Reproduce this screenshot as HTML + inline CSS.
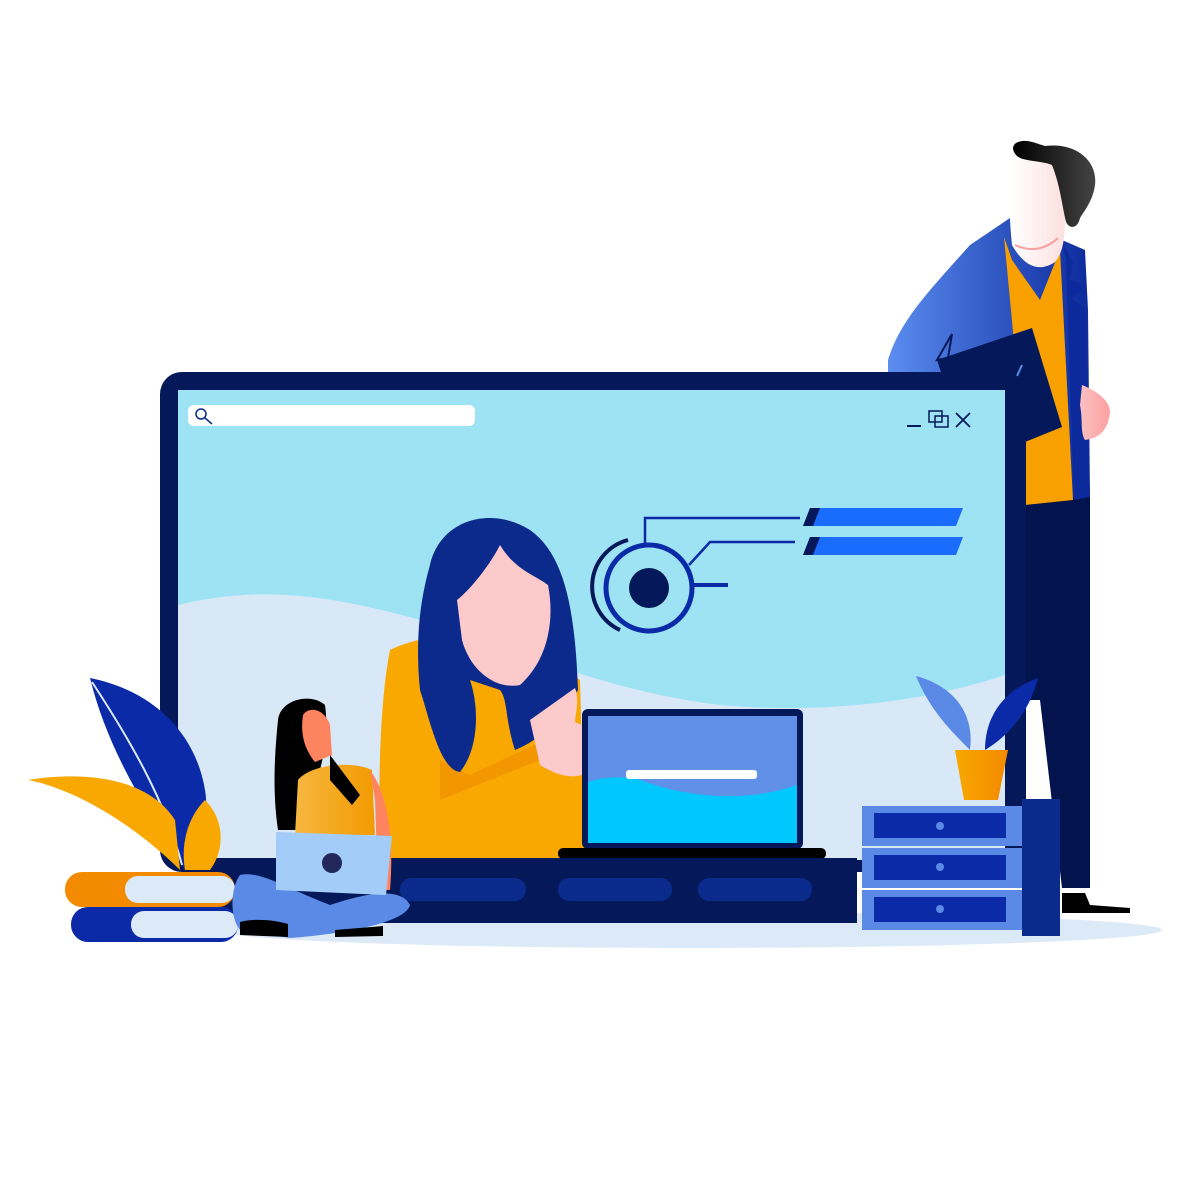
<!DOCTYPE html>
<html><head><meta charset="utf-8"><style>html,body{margin:0;padding:0;background:#fff;width:1200px;height:1200px;overflow:hidden}svg{display:block}</style></head>
<body>
<svg width="1200" height="1200" viewBox="0 0 1200 1200" xmlns="http://www.w3.org/2000/svg">
<defs>
<linearGradient id="jk" x1="0" x2="1"><stop offset="0" stop-color="#5b8df0"/><stop offset="1" stop-color="#0c2a9c"/></linearGradient>
<linearGradient id="hr" x1="0" x2="1"><stop offset="0" stop-color="#000"/><stop offset="1" stop-color="#444"/></linearGradient>
<linearGradient id="fc" x1="0" x2="1"><stop offset="0" stop-color="#fff"/><stop offset="1" stop-color="#fde0e0"/></linearGradient>
<linearGradient id="hd" x1="0" x2="1"><stop offset="0" stop-color="#fcc0c0"/><stop offset="1" stop-color="#fca0a0"/></linearGradient>
<linearGradient id="pot" x1="0" x2="1"><stop offset="0" stop-color="#f8a800"/><stop offset="1" stop-color="#f38a00"/></linearGradient>
<linearGradient id="gt" x1="0" x2="1"><stop offset="0" stop-color="#f6b840"/><stop offset="1" stop-color="#f39a00"/></linearGradient>
<clipPath id="scr"><rect x="178" y="390" width="827" height="470"/></clipPath>
</defs>
<!-- shadow -->
<ellipse cx="690" cy="930" rx="472" ry="18" fill="#dce9f7"/>
<!-- man (behind monitor) -->
<path d="M1025 500 L1090 495 L1090 888 L1062 888 L1040 700 L1025 700 Z" fill="#02134d"/>
<path d="M1062 893 L1085 893 L1090 905 L1130 908 L1130 913 L1062 913 Z" fill="#000"/>
<path d="M1010 218 L970 245 C930 290 900 320 888 360 L888 380 L1025 380 L1025 500 L1090 497 L1088 310 L1085 250 L1062 240Z" fill="url(#jk)"/>
<path d="M1004 237 L1012 260 L1040 300 L1060 250 L1073 500 L1025 505 L1025 460 L1010 300Z" fill="#f8a000"/>
<path d="M1062 242 L1073 262 L1070 280 L1086 285 L1072 298 L1085 310 L1090 497 L1074 500 L1066 260Z" fill="#0c2a9c"/>
<path d="M937 360 L1032 328 L1062 427 L1025 442 L1010 440 L950 400Z" fill="#05195a"/>
<path d="M937 360 L952 334 L948 358Z" fill="none" stroke="#05195a" stroke-width="2"/>
<line x1="1022" y1="365" x2="1017" y2="376" stroke="#5a8ae6" stroke-width="2"/>
<path d="M1082 385 C1095 390 1110 400 1110 412 C1108 430 1100 438 1085 440 C1080 432 1083 420 1080 405Z" fill="url(#hd)"/>
<path d="M1012 160 C1008 200 1010 225 1012 245 C1025 268 1040 272 1055 262 C1065 250 1066 230 1064 200 L1052 160Z" fill="url(#fc)"/>
<path d="M1015 245 C1030 252 1045 250 1058 238" fill="none" stroke="#f8a0a0" stroke-width="2"/>
<path d="M1016 143 C1025 138 1035 143 1045 146 C1075 142 1098 160 1095 185 C1093 200 1085 210 1080 218 C1078 228 1070 230 1066 222 C1062 205 1060 185 1052 165 C1040 160 1022 162 1016 155 C1012 150 1012 146 1016 143Z" fill="url(#hr)"/>
<!-- monitor -->
<rect x="160" y="372" width="866" height="500" rx="22" fill="#05195a"/>
<g clip-path="url(#scr)">
<rect x="178" y="390" width="827" height="470" fill="#9ee3f4"/>
<path d="M178 605 C260 585 330 595 420 620 C520 650 600 690 720 705 C830 715 930 700 1005 675 L1005 860 L178 860 Z" fill="#d9e8f7"/>
</g>
<rect x="188" y="405" width="287" height="21" rx="6" fill="#fff"/>
<circle cx="201" cy="414" r="5" fill="none" stroke="#0a2a8c" stroke-width="1.5"/><line x1="205" y1="418" x2="212" y2="424" stroke="#0a2a8c" stroke-width="1.5"/>
<line x1="907" y1="426" x2="921" y2="426" stroke="#05195a" stroke-width="2"/>
<rect x="929" y="411" width="13" height="11" fill="none" stroke="#05195a" stroke-width="1.5"/><rect x="935" y="416" width="13" height="11" fill="none" stroke="#05195a" stroke-width="1.5"/>
<path d="M956 413 L970 427 M970 413 L956 427" stroke="#05195a" stroke-width="1.8"/>
<!-- target -->
<path d="M620 630 A48 48 0 0 1 628 540" fill="none" stroke="#05195a" stroke-width="4"/>
<circle cx="649" cy="588" r="43" fill="none" stroke="#0a2aa8" stroke-width="5"/>
<circle cx="649" cy="588" r="20" fill="#05195a"/>
<path d="M645 545 L645 518 L800 518 M689 565 L710 542 L795 542" fill="none" stroke="#0a2aa8" stroke-width="2.5"/>
<path d="M692 585 L728 585" stroke="#0a2aa8" stroke-width="4"/>
<path d="M810 508 L963 508 L956 526 L803 526 Z" fill="#1a6cff"/><path d="M810 508 L820 508 L813 526 L803 526Z" fill="#05195a"/>
<path d="M810 537 L963 537 L956 555 L803 555 Z" fill="#1a6cff"/><path d="M810 537 L820 537 L813 555 L803 555Z" fill="#05195a"/>
<!-- woman -->
<path d="M390 650 C420 635 470 630 520 640 L580 680 L585 860 L380 860 C378 780 380 700 390 650Z" fill="#f8a800"/>
<path d="M440 760 L470 775 L545 740 L540 760 L440 800Z" fill="#f08c00" opacity=".6"/>
<path d="M430 565 C440 520 490 505 530 530 C565 555 575 610 578 690 C560 720 540 740 515 750 C505 720 508 700 500 690 L470 680 C480 710 478 750 460 772 C440 770 430 720 420 690 C415 640 420 600 430 565Z" fill="#0b2a8c"/>
<path d="M457 600 C470 590 490 565 500 545 C515 570 535 575 548 585 C555 620 548 660 520 685 C495 690 470 670 462 640Z" fill="#fccaca"/>
<path d="M530 720 L575 688 C580 700 575 715 575 722 L615 740 C630 748 625 758 610 755 L585 750 L590 770 C580 780 560 778 540 765Z" fill="#fccaca"/>
<!-- laptop -->
<rect x="582" y="709" width="221" height="140" rx="6" fill="#05195a"/>
<rect x="588" y="716" width="209" height="127" fill="#00c8ff"/>
<path d="M588 716 L797 716 L797 785 C740 805 680 795 640 780 C620 775 600 778 588 782Z" fill="#6090e8"/>
<rect x="626" y="770" width="131" height="9" rx="3" fill="#fff"/>
<rect x="558" y="848" width="268" height="11" rx="5" fill="#000"/>
<!-- base -->
<rect x="215" y="858" width="642" height="65" fill="#05195a"/>
<rect x="400" y="878" width="126" height="23" rx="11" fill="#0a2a8c"/>
<rect x="558" y="878" width="114" height="23" rx="11" fill="#0a2a8c"/>
<rect x="698" y="878" width="114" height="23" rx="11" fill="#0a2a8c"/>
<!-- cabinet -->
<rect x="1022" y="799" width="38" height="137" fill="#0a2a8c"/>
<rect x="862" y="806" width="160" height="40" fill="#5a8ae6"/><rect x="874" y="813" width="132" height="25" fill="#0a2aa8"/><circle cx="940" cy="826" r="4" fill="#5a8ae6"/>
<rect x="862" y="848" width="160" height="40" fill="#5a8ae6"/><rect x="874" y="855" width="132" height="25" fill="#0a2aa8"/><circle cx="940" cy="867" r="4" fill="#5a8ae6"/>
<rect x="862" y="890" width="160" height="40" fill="#5a8ae6"/><rect x="874" y="897" width="132" height="25" fill="#0a2aa8"/><circle cx="940" cy="909" r="4" fill="#5a8ae6"/>
<path d="M955 750 L1008 750 L998 800 L964 800Z" fill="url(#pot)"/>
<path d="M970 750 C950 730 930 710 916 676 C950 685 975 710 970 750Z" fill="#5a8ae6"/>
<path d="M985 750 C985 715 1005 690 1038 678 C1030 710 1010 735 985 750Z" fill="#0a2aa8"/>
<!-- left plant -->
<path d="M185 870 C160 830 110 760 90 678 C150 690 195 730 205 790 C210 820 200 850 185 870Z" fill="#0a2aa8"/>
<path d="M92 682 C130 740 165 800 182 865" stroke="#dce9f7" stroke-width="2" fill="none"/>
<path d="M180 870 C140 830 80 790 28 780 C90 770 150 780 175 820Z" fill="#f8a800"/>
<path d="M185 870 C180 840 190 815 205 800 C225 820 225 850 210 870Z" fill="#f8a800"/>
<!-- books -->
<rect x="65" y="872" width="170" height="35" rx="17" fill="#f38a00"/>
<rect x="125" y="876" width="110" height="27" rx="13" fill="#dce9f7"/>
<rect x="71" y="907" width="167" height="35" rx="17" fill="#0a2aa8"/>
<rect x="131" y="911" width="107" height="27" rx="13" fill="#dce9f7"/>
<!-- girl -->
<path d="M278 720 C280 700 310 692 325 705 C330 740 320 780 300 830 L278 830 C272 790 275 750 278 720Z" fill="#000"/>
<path d="M303 715 C310 705 325 710 330 725 L332 755 L315 762 C305 750 300 735 303 715Z" fill="#fe8460"/>
<path d="M298 780 C310 765 350 760 372 770 L375 835 L295 835Z" fill="url(#gt)"/>
<path d="M330 755 L360 795 L352 805 L330 780Z" fill="#000"/>
<path d="M370 770 C385 790 395 830 390 890 L378 890 L375 800Z" fill="#fe8460"/>
<path d="M240 875 C260 870 290 890 330 905 C360 895 400 885 410 905 C405 925 330 935 290 938 L240 930 C228 915 232 885 240 875Z" fill="#5a8ae6"/>
<path d="M240 922 C255 918 275 920 288 924 L288 937 L240 935Z M335 930 L383 926 L383 936 L335 937Z" fill="#000"/>
<path d="M276 832 L392 836 L386 895 L276 890Z" fill="#a4ccf8"/>
<circle cx="332" cy="863" r="10" fill="#22285c"/>
</svg>
</body></html>
